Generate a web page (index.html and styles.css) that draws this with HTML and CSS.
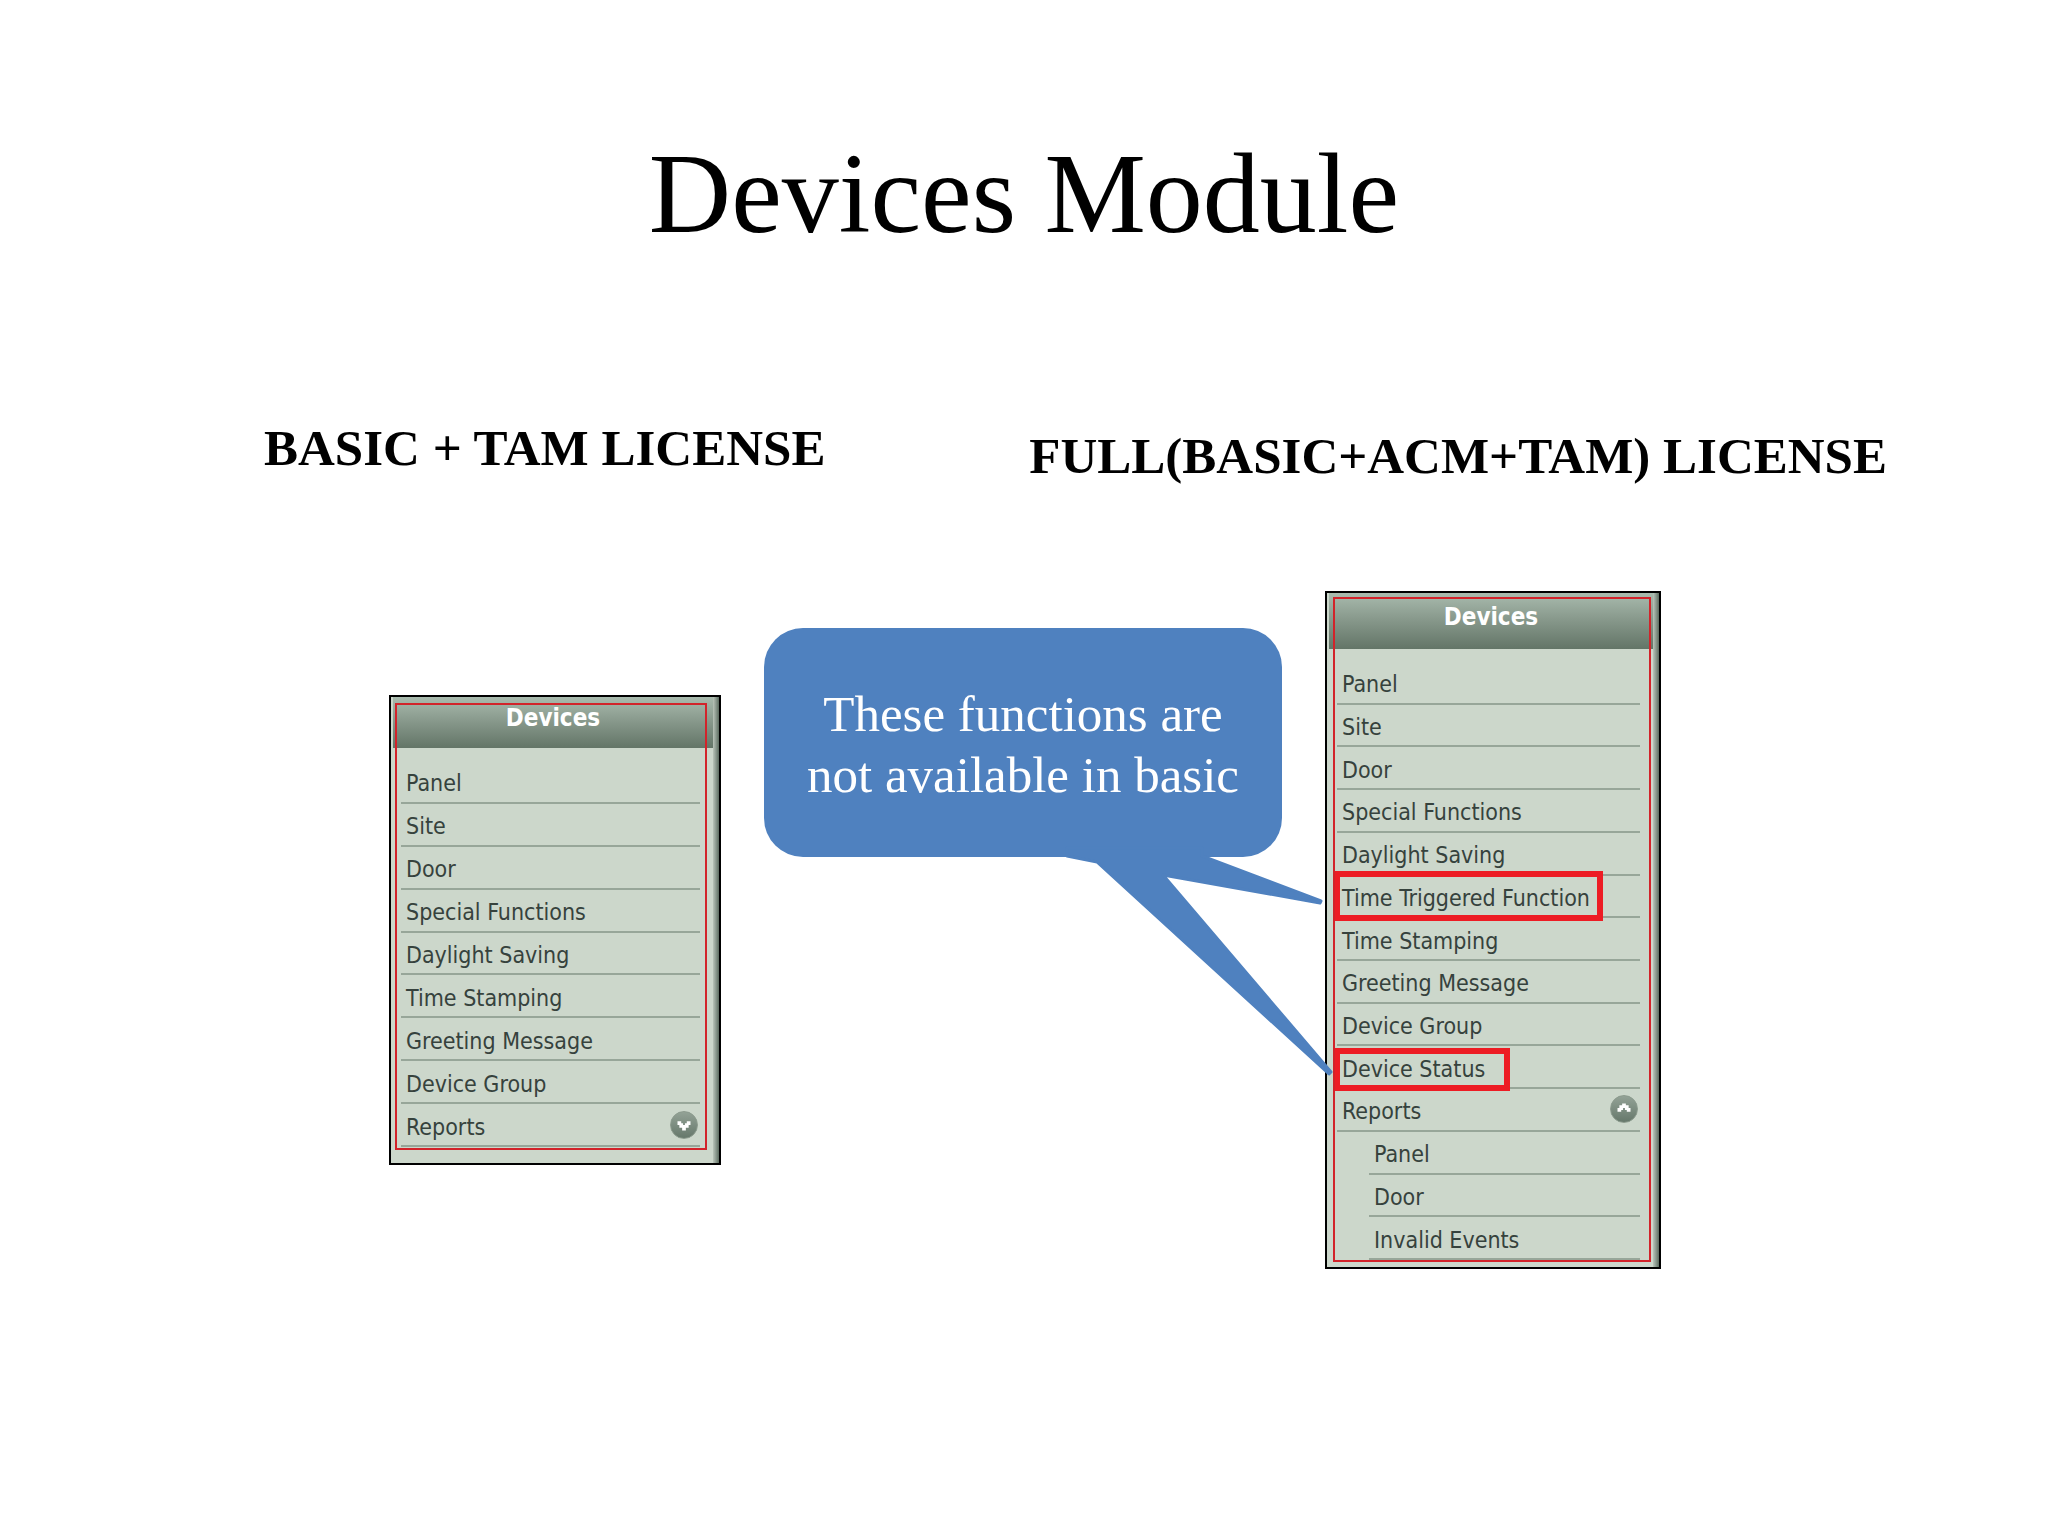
FILE: index.html
```
<!DOCTYPE html>
<html lang="en">
<head>
  <meta charset="UTF-8" />
  <title>Devices Module</title>
  <link rel="stylesheet" href="styles.css">
</head>
<body>
  <h1>Devices Module</h1>

  <div class="licenses">
    <h2>BASIC + TAM LICENSE</h2>
    <h2 class="full">FULL(BASIC+ACM+TAM) LICENSE</h2>
  </div>

  <main class="compare">
    <nav class="panel panel-basic" aria-label="Basic devices menu">
      <h3>Devices</h3>
      <ul>
        <li><a href="#">Panel</a></li>
        <li><a href="#">Site</a></li>
        <li><a href="#">Door</a></li>
        <li><a href="#">Special Functions</a></li>
        <li><a href="#">Daylight Saving</a></li>
        <li><a href="#">Time Stamping</a></li>
        <li><a href="#">Greeting Message</a></li>
        <li><a href="#">Device Group</a></li>
        <li>
          <a href="#">Reports</a>
          <button class="toggle" aria-label="Expand reports">
            <svg viewBox="0 0 28 28"><path d="M7 10h4v2h2v2h2v-2h2v-2h4v4h-2v3h-3v3h-4v-3H9v-3H7z" /></svg>
          </button>
        </li>
      </ul>
    </nav>

    <div class="callout">
      <svg class="tail" viewBox="0 0 600 460">
        <path d="M303 228L333 234L565 446L567 444L399 247L556 275L557 273L438 228L438 220H303Z" />
      </svg>
      <p>These functions are<br>not available in basic</p>
    </div>

    <nav class="panel panel-full" aria-label="Full devices menu">
      <h3>Devices</h3>
      <ul>
        <li><a href="#">Panel</a></li>
        <li><a href="#">Site</a></li>
        <li><a href="#">Door</a></li>
        <li><a href="#">Special Functions</a></li>
        <li><a href="#">Daylight Saving</a></li>
        <li><a href="#" class="marked">Time Triggered Function</a></li>
        <li><a href="#">Time Stamping</a></li>
        <li><a href="#">Greeting Message</a></li>
        <li><a href="#">Device Group</a></li>
        <li><a href="#" class="marked marked-short">Device Status</a></li>
        <li>
          <a href="#">Reports</a>
          <button class="toggle" aria-label="Collapse reports">
            <svg viewBox="0 0 28 28"><path d="M12 8h4v2h3v3h2v4h-4v-2h-2v-2h-2v2h-2v2H7v-4h2v-3h3z" /></svg>
          </button>
        </li>
        <li class="sub"><a href="#">Panel</a></li>
        <li class="sub"><a href="#">Door</a></li>
        <li class="sub"><a href="#">Invalid Events</a></li>
      </ul>
    </nav>
  </main>
</body>
</html>
```
FILE: styles.css
```
* {
  box-sizing: border-box;
  margin: 0;
  padding: 0;
}

body {
  background: #fff;
  color: #000;
  font-family: "Liberation Serif", "Times New Roman", serif;
  min-height: 100vh;
  padding-top: 128px;
}

h1 {
  font-size: 114px;
  font-weight: 400;
  line-height: 132px;
  text-align: center;
}

/* License headings */
.licenses {
  display: flex;
  justify-content: space-between;
  padding: 158px 161px 0 264px;
  height: 331px;
}

h2 {
  font-size: 51px;
  font-weight: 700;
  line-height: 60px;
  white-space: nowrap;
}

h2.full {
  padding-top: 8px;
}

.compare {
  display: flex;
  justify-content: center;
  align-items: center;
  gap: 43px;
  padding-left: 2px;
}

/* Menu panels */
.panel {
  position: relative;
  border: 2px solid #000;
  padding: 0 6px 0 2px;
  background: linear-gradient(to right, #b9c4b9, #8b998e 3px, #5c6c60) right / 6px 100% no-repeat, #ccd7cb;
  font-family: "DejaVu Sans Condensed", Tahoma, sans-serif;
}

/* thin red frame drawn over the menu */
.panel::after {
  content: "";
  position: absolute;
  inset: 6px 12px 13px 4px;
  border: 2px solid #d2232a;
  pointer-events: none;
}

.panel-basic {
  width: 332px;
}

.panel-full {
  width: 336px;
}

.panel-full::after {
  inset: 4px 8px 5px 6px;
}

.panel h3 {
  height: 56px;
  background: linear-gradient(#a9bbae, #899a8d 45%, #637567);
  color: #fff;
  font-size: 24px;
  font-weight: 700;
  line-height: 48px;
  text-align: center;
}

.panel-basic h3 {
  height: 51px;
  line-height: 42px;
}

.panel ul {
  list-style: none;
  display: grid;
  grid-auto-rows: 1fr;
  height: 598px;
  margin: 13px 13px 7px 8px;
}

.panel-basic ul {
  height: 386px;
  margin-bottom: 16px;
}

.panel li {
  display: flex;
  align-items: center;
  justify-content: space-between;
  border-bottom: 2px solid #97a699;
  padding: 0 2px 0 5px;
}

.panel li.sub {
  margin-left: 32px;
}

.panel a {
  position: relative;
  padding-top: 4px;
  color: #36423d;
  font-size: 23px;
  line-height: 32px;
  text-decoration: none;
  white-space: nowrap;
}

.marked::after {
  content: "";
  position: absolute;
  inset: -7px -13px -7px -8px;
  border: 6px solid #ed1c24;
}

.marked-short::after {
  inset: -1px -25px -6px -8px;
}

.toggle {
  width: 28px;
  height: 28px;
  border: 1px solid #8b9a8d;
  border-radius: 50%;
  background: linear-gradient(#93a296, #66786b);
  cursor: pointer;
}

.toggle svg {
  display: block;
  width: 100%;
  fill: #fff;
}

/* Callout */
.callout {
  position: relative;
  z-index: 1;
  align-self: flex-start;
  width: 518px;
  margin-top: 37px;
  padding: 56px 20px 51px;
  border-radius: 39px;
  background: #4f81bf;
  color: #fff;
  font-size: 51px;
  line-height: 61px;
  text-align: center;
}

.callout p {
  position: relative;
  white-space: nowrap;
}

.tail {
  position: absolute;
  left: 0;
  top: 0;
  width: 600px;
  height: 460px;
  fill: #4f81bf;
  stroke: #4f81bf;
  stroke-width: 3;
  stroke-linejoin: round;
  pointer-events: none;
}
```
